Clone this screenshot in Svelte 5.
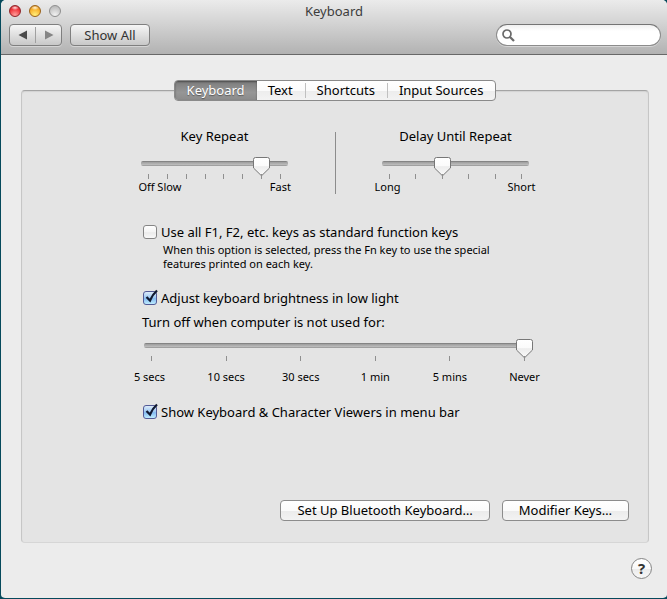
<script>
	let tab = $state('Keyboard');
	const tabs = ['Keyboard', 'Text', 'Shortcuts', 'Input Sources'];

	let keyRepeat = $state(6);
	let delay = $state(2);
	let turnOff = $state(5);

	let functionKeys = $state(false);
	let brightness = $state(true);
	let viewers = $state(true);

	let search = $state('');

	const repeatTicks = ['Off', 'Slow', '', '', '', '', '', 'Fast'];
	const delayTicks = ['Long', '', '', '', '', 'Short'];
	const turnOffTicks = ['5 secs', '10 secs', '30 secs', '1 min', '5 mins', 'Never'];
</script>

{#snippet ticks(labels)}
	<div class="ticks">
		{#each labels as label}
			<div class="tick">
				<i></i>
				<span>{label}</span>
			</div>
		{/each}
	</div>
{/snippet}

<div class="window">
	<header>
		<div class="titlebar">
			<div class="lights">
				<button class="light red" aria-label="Close"></button>
				<button class="light yellow" aria-label="Minimize"></button>
				<button class="light" aria-label="Zoom" disabled></button>
			</div>
			<h1>Keyboard</h1>
		</div>
		<div class="toolbar">
			<div class="nav">
				<button aria-label="Back">
					<svg width="10" height="10" viewBox="0 0 10 10"><path d="M9 0.5v9L0.5 5z" fill="#4a4a4a" /></svg>
				</button>
				<button aria-label="Forward">
					<svg width="10" height="10" viewBox="0 0 10 10"><path d="M1 0.5v9L9.500 5z" fill="#858585" /></svg>
				</button>
			</div>
			<button class="show-all">Show All</button>
			<label class="search">
				<svg width="13" height="13" viewBox="0 0 13 13" fill="none" stroke="#6b6b6b">
					<circle cx="5" cy="5" r="4" stroke-width="1.700" />
					<path d="M8 8l4 4" stroke-width="2.300" />
				</svg>
				<input type="text" aria-label="Search" bind:value={search} />
			</label>
		</div>
	</header>

	<main>
		<div class="tabs" role="tablist">
			{#each tabs as name}
				<button role="tab" aria-selected={tab === name} class:active={tab === name} onclick={() => (tab = name)}>
					{name}
				</button>
			{/each}
		</div>

		<section class="panel">
			<div class="settings">
				<div class="repeat">
					<div class="repeat-group">
						<label class="heading" for="key-repeat">Key Repeat</label>
						<div class="slider">
							<input id="key-repeat" type="range" min="0" max="7" bind:value={keyRepeat} />
						</div>
						{@render ticks(repeatTicks)}
					</div>
					<div class="separator"></div>
					<div class="repeat-group">
						<label class="heading" for="delay">Delay Until Repeat</label>
						<div class="slider">
							<input id="delay" type="range" min="0" max="5" bind:value={delay} />
						</div>
						{@render ticks(delayTicks)}
					</div>
				</div>

				<div class="options">
					<label class="check">
						<input type="checkbox" bind:checked={functionKeys} />
						Use all F1, F2, etc. keys as standard function keys
					</label>
					<p class="hint">
						When this option is selected, press the Fn key to use the special features printed on each key.
					</p>

					<label class="check">
						<input type="checkbox" bind:checked={brightness} />
						Adjust keyboard brightness in low light
					</label>
					<label class="turn-off" for="turn-off">Turn off when computer is not used for:</label>
					<div class="timeout">
						<div class="slider">
							<input id="turn-off" type="range" min="0" max="5" bind:value={turnOff} />
						</div>
						{@render ticks(turnOffTicks)}
					</div>

					<label class="check">
						<input type="checkbox" bind:checked={viewers} />
						Show Keyboard &amp; Character Viewers in menu bar
					</label>
				</div>
			</div>

			<div class="actions">
				<button>Set Up Bluetooth Keyboard…</button>
				<button>Modifier Keys…</button>
			</div>
		</section>

		<footer>
			<button class="help" aria-label="Help">?</button>
		</footer>
	</main>
</div>

<style>
	:global(body) {
		background: #064a5c;
	}

	.window {
		box-sizing: border-box;
		min-height: 100vh;
		margin-left: 1px;
		border-bottom: 1px solid #064a5c;
		border-radius: 5px 5px 4px 4px;
		background: #ececec;
		background-clip: padding-box;
		overflow: hidden;
		display: flex;
		flex-direction: column;
		font-family: 'Lucida Grande', 'Noto Sans', 'Open Sans', sans-serif;
		font-size: 13px;
		line-height: 18px;
		color: #000;
	}

	button,
	input {
		font: inherit;
		color: inherit;
		margin: 0;
		padding: 0;
	}

	/* title bar and toolbar */
	header {
		background: linear-gradient(#ebebeb, #d2d2d2 45%, #b2b2b2);
		border-bottom: 1px solid #686868;
		padding-bottom: 8px;
	}

	.titlebar {
		display: grid;
		grid-template-columns: 1fr auto 1fr;
		align-items: center;
		height: 22px;
		padding: 0 8px;
		margin-bottom: 2px;
	}

	h1 {
		margin: 0;
		font-size: 13px;
		font-weight: normal;
		color: #3c3c3c;
	}

	.lights {
		display: flex;
		gap: 8px;
	}

	.light {
		width: 12px;
		height: 12px;
		border: 1px solid #8e8e8e;
		border-radius: 50%;
		background: radial-gradient(circle at 50% 90%, #f2f2f2, #c4c4c4 70%, #b2b2b2);
	}

	.light.red {
		border-color: #8f2428;
		background: radial-gradient(ellipse 40% 22% at 50% 18%, #ffe5e5, transparent),
			radial-gradient(circle at 50% 90%, #ffa09c, #f0363c 60%, #c3151d);
	}

	.light.yellow {
		border-color: #9a6218;
		background: radial-gradient(ellipse 40% 22% at 50% 18%, #fff6dc, transparent),
			radial-gradient(circle at 50% 90%, #fff07c, #f8b22c 60%, #d2811b);
	}

	.toolbar {
		display: flex;
		gap: 8px;
		padding: 0 6px 0 8px;
	}

	.nav,
	.show-all {
		box-sizing: border-box;
		height: 22px;
		border: 1px solid #7f7f7f;
		border-radius: 4px;
		background: linear-gradient(#f6f6f6, #c8c8c8);
		box-shadow: 0 1px 0 rgba(255, 255, 255, 0.4);
	}

	.nav {
		display: flex;
		align-items: center;
		width: 53px;
	}

	.nav button {
		flex: 1;
		height: 16px;
		border: 0;
		background: none;
		display: flex;
		align-items: center;
		justify-content: center;
	}

	.nav button + button {
		border-left: 1px solid #a0a0a0;
	}

	.show-all {
		width: 80px;
		color: #333;
	}

	.search {
		box-sizing: border-box;
		display: flex;
		align-items: center;
		gap: 4px;
		width: 165px;
		height: 22px;
		margin-left: auto;
		padding: 0 8px 0 5px;
		border: 1px solid #8c8c8c;
		border-top-color: #747474;
		border-radius: 11px;
		background: linear-gradient(#f0f0f0, #fff 6px);
		box-shadow: 0 1px 0 rgba(255, 255, 255, 0.4);
	}

	.search svg {
		flex: none;
	}

	.search input {
		flex: 1;
		min-width: 0;
		border: 0;
		outline: 0;
		background: none;
	}

	main {
		flex: 1;
		display: flex;
		flex-direction: column;
		padding: 25px 18px 0 20px;
	}

	/* tabs sit over the top edge of the panel */
	.tabs {
		position: relative;
		z-index: 1;
		align-self: center;
		box-sizing: border-box;
		display: flex;
		align-items: center;
		height: 21px;
		margin-bottom: -11px;
		border: 1px solid #8a8a8a;
		border-radius: 4px;
		background: linear-gradient(#fff, #fbfbfb 50%, #ededed 55%, #f3f3f3);
		overflow: hidden;
	}

	.tabs button {
		height: 15px;
		line-height: 15px;
		padding: 0 12px 0 11px;
		border: 0;
		border-left: 1px solid #c0c0c0;
		background: none;
	}

	.tabs button:first-child,
	.tabs .active + button {
		border-left: 0;
	}

	.tabs .active {
		height: 19px;
		padding: 0 12px;
		color: #fff;
		background: linear-gradient(#7c7c7c, #969696 60%, #8b8b8b);
		box-shadow: inset 0 1px 2px rgba(0, 0, 0, 0.4);
		text-shadow: 0 1px 1px rgba(0, 0, 0, 0.4);
	}

	.panel {
		flex: 1;
		display: flex;
		flex-direction: column;
		justify-content: space-between;
		padding: 36px 19px 21px;
		border: 1px solid #c6c6c6;
		border-top-color: #a4a4a4;
		border-bottom-color: #d6d6d6;
		border-radius: 4px;
		background: #e4e4e4;
		box-shadow: inset 0 1px 1px #d2d2d2;
	}

	.settings {
		align-self: center;
		width: 388px;
		max-width: 100%;
	}

	.repeat {
		display: flex;
		justify-content: space-between;
	}

	.repeat-group {
		width: 147px;
	}

	.heading {
		display: block;
		text-align: center;
		margin-bottom: 12px;
	}

	.separator {
		width: 1px;
		height: 62px;
		margin-top: 5px;
		background: #8c8c8c;
	}

	/* sliders: groove and input share one grid cell */
	.slider {
		display: grid;
		align-items: center;
		height: 20px;
	}

	.slider::before {
		content: '';
		grid-area: 1 / 1;
		height: 5px;
		margin-bottom: 7px;
		border-radius: 2px;
		background: linear-gradient(#717171, #a0a0a0 25%, #bcbcbc 75%, #8e8e8e);
	}

	.slider input {
		grid-area: 1 / 1;
		appearance: none;
		height: 20px;
		margin: 0 -1px;
		background: none;
		outline: 0;
	}

	.slider input::-webkit-slider-thumb {
		appearance: none;
		width: 17px;
		height: 20px;
		background: url("data:image/svg+xml,%3Csvg xmlns='http://www.w3.org/2000/svg' width='17' height='20'%3E%3ClinearGradient id='g' x2='0' y2='1'%3E%3Cstop stop-color='%23fff'/%3E%3Cstop offset='.45' stop-color='%23fbfbfb'/%3E%3Cstop offset='.5' stop-color='%23ededed'/%3E%3Cstop offset='1' stop-color='%23fafafa'/%3E%3C/linearGradient%3E%3Cpath d='M2.500 .5h12q2 0 2 2v8.500L8.500 18.800.5 11V2.500q0-2 2-2z' fill='url(%23g)' stroke='%23777'/%3E%3C/svg%3E");
	}

	.ticks {
		display: flex;
		justify-content: space-between;
		padding: 0 7px;
		margin-top: -3px;
	}

	.tick {
		width: 1px;
		display: flex;
		flex-direction: column;
		align-items: center;
		gap: 1px;
		font-size: 11px;
		line-height: 14px;
		white-space: nowrap;
	}

	.tick i {
		width: 1px;
		height: 5px;
		background: #8f8f8f;
	}

	/* the first two labels lean away from each other */
	.tick:first-child span {
		padding-right: 4px;
	}

	.repeat-group .tick:nth-child(2) span {
		padding-left: 4px;
	}

	.options {
		padding-top: 29px;
	}

	.check {
		display: flex;
		align-items: center;
		gap: 2px;
		padding-left: 2px;
	}

	.check input {
		appearance: none;
		flex: none;
		width: 16px;
		height: 18px;
		background: url("data:image/svg+xml,%3Csvg xmlns='http://www.w3.org/2000/svg' width='16' height='18'%3E%3ClinearGradient id='g' x2='0' y2='1'%3E%3Cstop stop-color='%23fff'/%3E%3Cstop offset='.5' stop-color='%23f4f4f4'/%3E%3Cstop offset='.55' stop-color='%23ebebeb'/%3E%3Cstop offset='1' stop-color='%23fafafa'/%3E%3C/linearGradient%3E%3Crect x='.5' y='2.500' width='13' height='13' rx='2.500' fill='url(%23g)' stroke='%23858585'/%3E%3C/svg%3E");
	}

	.check input:checked {
		background-image: url("data:image/svg+xml,%3Csvg xmlns='http://www.w3.org/2000/svg' width='16' height='18'%3E%3ClinearGradient id='g' x2='0' y2='1'%3E%3Cstop stop-color='%23e3effb'/%3E%3Cstop offset='.5' stop-color='%2399c6f2'/%3E%3Cstop offset='.55' stop-color='%2384bbf1'/%3E%3Cstop offset='1' stop-color='%23c4f1ff'/%3E%3C/linearGradient%3E%3Crect x='.5' y='2.500' width='13' height='13' rx='2.500' fill='url(%23g)' stroke='%23535a96'/%3E%3Cpath d='M3.500 8l3.500 3.500Q9.500 5.500 14 1.500' fill='none' stroke='%23101830' stroke-width='2.300'/%3E%3C/svg%3E");
	}

	.hint {
		max-width: 350px;
		margin: 2px 0 18px 22px;
		font-size: 11px;
		line-height: 14px;
	}

	.turn-off {
		display: block;
		margin-top: 6px;
		padding-left: 1px;
	}

	.timeout {
		margin: 8px -3px 19px 3px;
	}

	.timeout .tick {
		gap: 9px;
	}

	/* push buttons */
	.actions {
		display: flex;
		justify-content: flex-end;
		gap: 12px;
	}

	.actions button {
		height: 21px;
		line-height: 19px;
		padding: 0 16px;
		border: 1px solid #8c8c8c;
		border-radius: 4px;
		background: linear-gradient(#fff, #fbfbfb 50%, #ececec 55%, #f3f3f3);
	}

	footer {
		display: flex;
		justify-content: flex-end;
		margin-right: -3px;
		padding: 15px 0 19px;
	}

	.help {
		width: 21px;
		height: 21px;
		border: 1px solid #858585;
		border-radius: 50%;
		background: linear-gradient(#fff, #f9f9f9 50%, #ececec 55%, #f8f8f8);
		font-size: 15px;
		font-weight: bold;
		line-height: 19px;
		color: #333;
	}
</style>
